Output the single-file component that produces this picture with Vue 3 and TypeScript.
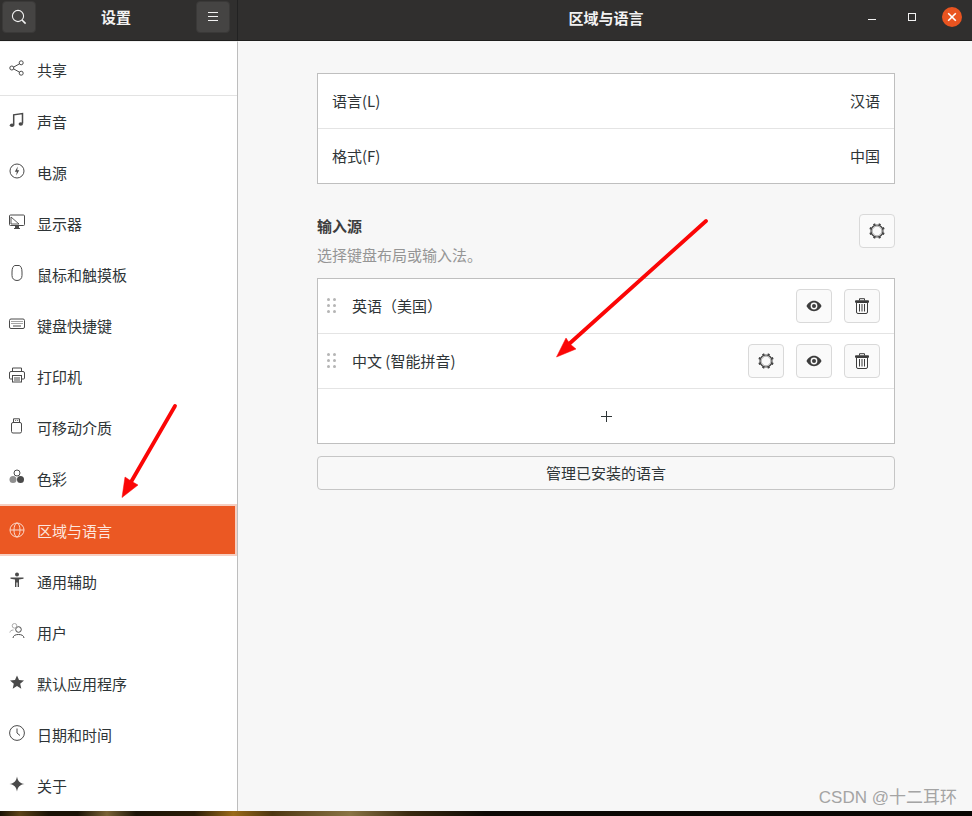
<script setup lang="ts">
type NavItem = { label: string; icon: string; active?: boolean; sep?: boolean }

const items: NavItem[] = [
  { label: '共享', icon: 'share', sep: true },
  { label: '声音', icon: 'music' },
  { label: '电源', icon: 'power' },
  { label: '显示器', icon: 'display' },
  { label: '鼠标和触摸板', icon: 'mouse' },
  { label: '键盘快捷键', icon: 'keyboard' },
  { label: '打印机', icon: 'printer' },
  { label: '可移动介质', icon: 'usb' },
  { label: '色彩', icon: 'color' },
  { label: '区域与语言', icon: 'globe', active: true },
  { label: '通用辅助', icon: 'access' },
  { label: '用户', icon: 'users' },
  { label: '默认应用程序', icon: 'star' },
  { label: '日期和时间', icon: 'clock' },
  { label: '关于', icon: 'about' },
]

const gearTeeth = [0, 45, 90, 135, 180, 225, 270, 315]
</script>

<template>
  <div class="screen">
    <div class="window">
      <header class="titlebar">
        <div class="titlebar__left">
          <button class="hbtn">
            <svg width="16" height="16" viewBox="0 0 16 16" fill="none" stroke="#f2f2f2" stroke-width="1.1">
              <circle cx="7" cy="7" r="5.6" />
              <path d="M11 11l3.6 3.6" stroke-width="1.6" />
            </svg>
          </button>
          <span class="titlebar__title">设置</span>
          <button class="hbtn">
            <svg width="12" height="12" viewBox="0 0 12 12" stroke="#f2f2f2" stroke-width="1">
              <path d="M1 1.5h10M1 5.5h10M1 9.5h10" />
            </svg>
          </button>
        </div>
        <div class="titlebar__right">
          <span class="titlebar__title titlebar__title--main">区域与语言</span>
          <div class="wm">
            <span class="wm__min"></span>
            <span class="wm__max"></span>
            <span class="wm__close">
              <svg width="10" height="10" viewBox="0 0 10 10" stroke="#fff" stroke-width="1.6">
                <path d="M1.2 1.2l7.6 7.6M8.8 1.2L1.2 8.8" />
              </svg>
            </span>
          </div>
        </div>
      </header>

      <div class="content">
        <aside class="sidebar">
          <ul class="nav">
            <li
              v-for="item in items"
              :key="item.label"
              :class="['nav__row', item.active && 'nav__row--active', item.sep && 'nav__row--sep']"
            >
              <svg class="nav__icon" width="16" height="16" viewBox="0 0 16 16" fill="none" stroke="currentColor">
                <template v-if="item.icon === 'share'">
                  <circle cx="2.8" cy="8" r="2" /><circle cx="12.2" cy="2.8" r="2" /><circle cx="12.2" cy="13.2" r="2" />
                  <path d="M4.6 7.1l5.800-3.200M4.6 8.900l5.800 3.200" />
                </template>
                <template v-else-if="item.icon === 'music'">
                  <path d="M4.700 13V2.800l8.800-1.300V11.500" stroke-width="1.500" />
                  <ellipse cx="3" cy="13.200" rx="2.200" ry="1.800" fill="currentColor" stroke="none" />
                  <ellipse cx="11.800" cy="12" rx="2.200" ry="1.800" fill="currentColor" stroke="none" />
                </template>
                <template v-else-if="item.icon === 'power'">
                  <circle cx="8" cy="8" r="7" />
                  <path d="M8.800 3.500L5.800 8.800h2l-.6 3.700 3-5.300h-2z" fill="currentColor" stroke="none" />
                </template>
                <template v-else-if="item.icon === 'display'">
                  <rect x="0.500" y="1" width="15" height="10.500" rx="1" />
                  <path d="M2 3l8 7H2z" stroke-width="0.900" />
                  <path d="M5 14.500h6M6.500 11.500h3v3h-3z" fill="currentColor" />
                </template>
                <template v-else-if="item.icon === 'mouse'">
                  <path d="M5.800.5h4.400C11.800 1 13 3 13 7v3.500c0 3-2 5-5 5s-5-2-5-5V7c0-4 1.200-6 2.800-6.500z" />
                </template>
                <template v-else-if="item.icon === 'keyboard'">
                  <rect x="0.500" y="3" width="15" height="9.500" rx="1.500" />
                  <path d="M2.500 5.500h11M2.500 7.500h11" stroke-dasharray="1 1" />
                  <path d="M4 10h8" />
                </template>
                <template v-else-if="item.icon === 'printer'">
                  <path d="M3.500 4.500V1h9v3.500" />
                  <path d="M3.500 12H1.500a1 1 0 0 1-1-1V6a1.500 1.500 0 0 1 1.500-1.500h12A1.500 1.500 0 0 1 15.500 6v5a1 1 0 0 1-1 1h-2" />
                  <rect x="3.500" y="8.500" width="9" height="6.500" />
                  <path d="M5 11h6M5 13h6" />
                </template>
                <template v-else-if="item.icon === 'usb'">
                  <rect x="2.500" y="4.500" width="10" height="10.500" rx="1.500" />
                  <path d="M4.500 4.500V.8h6v3.700M6.300 2.500h.8M8.300 2.500h.8" />
                </template>
                <template v-else-if="item.icon === 'color'">
                  <circle cx="8" cy="4" r="3" />
                  <circle cx="4" cy="10.500" r="3.500" fill="#8f8f8f" stroke="none" />
                  <circle cx="11.500" cy="10.500" r="3.500" fill="currentColor" stroke="none" />
                </template>
                <template v-else-if="item.icon === 'globe'">
                  <circle cx="8" cy="8" r="7" />
                  <ellipse cx="8" cy="8" rx="3" ry="7" />
                  <path d="M1 8h14" />
                </template>
                <template v-else-if="item.icon === 'access'">
                  <circle cx="8" cy="2.500" r="2" fill="currentColor" stroke="none" />
                  <path d="M1.500 5.500h13v1.300L10 7.500V15H8.600v-4.500H7.400V15H6V7.500L1.500 6.800z" fill="currentColor" stroke="none" />
                </template>
                <template v-else-if="item.icon === 'users'">
                  <circle cx="9.500" cy="6.500" r="2.800" />
                  <path d="M4 15c.2-2.500 2.500-3.500 5.500-3.500s5.300 1 5.500 3.500" />
                  <circle cx="5.500" cy="2.800" r="2.300" stroke="#aaa" />
                  <path d="M.8 9.500C1 8 2.500 7 4.500 7" stroke="#aaa" />
                </template>
                <template v-else-if="item.icon === 'star'">
                  <path d="M8 1.500l2 4.500 5 .5-3.800 3.300 1.100 5L8 12.100l-4.300 2.700 1.100-5L1 6.500l5-.5z" fill="currentColor" stroke="none" />
                </template>
                <template v-else-if="item.icon === 'clock'">
                  <circle cx="8" cy="8" r="7.400" />
                  <path d="M8 3.500V8l3 2.500" />
                </template>
                <template v-else>
                  <path d="M8 .5C8.700 5 11 7.300 15.500 8 11 8.700 8.700 11 8 15.500 7.300 11 5 8.700.5 8 5 7.300 7.300 5 8 .5z" fill="currentColor" stroke="none" />
                </template>
              </svg>
              <span class="nav__label">{{ item.label }}</span>
            </li>
          </ul>
        </aside>

        <main class="main">
          <section class="panel">
            <div class="row row--text"><span>语言(L)</span><span>汉语</span></div>
            <div class="row row--text"><span>格式(F)</span><span>中国</span></div>
          </section>

          <div class="sources-head">
            <div class="sources-head__text">
              <h2 class="sources-head__title">输入源</h2>
              <p class="sources-head__sub">选择键盘布局或输入法。</p>
            </div>
            <button class="ibtn">
              <svg width="16" height="16" viewBox="0 0 16 16" fill="none" stroke="#444">
                <circle cx="8" cy="8" r="6" stroke-width="1.200" />
                <circle cx="8" cy="8" r="4.800" stroke="#999" stroke-width="0.800" />
                <path v-for="a in gearTeeth" :key="a" d="M8 .2v1.600" stroke-width="2.200" :transform="`rotate(${a + 22.5} 8 8)`" />
              </svg>
            </button>
          </div>

          <section class="panel panel--list">
            <div class="row">
              <span class="grip"><i v-for="n in 6" :key="n"></i></span>
              <span class="row__name">英语（美国）</span>
              <button class="ibtn">
                <svg width="16" height="16" viewBox="0 0 16 16">
                  <path d="M8 2.800C4.400 2.800 1.600 5.500.5 8c1.100 2.500 3.900 5.200 7.500 5.200s6.400-2.700 7.500-5.200C14.400 5.500 11.600 2.800 8 2.800z" fill="#3d3d3d" />
                  <circle cx="8" cy="8" r="3.400" fill="#fafafa" />
                  <circle cx="8" cy="8" r="2" fill="#3d3d3d" />
                </svg>
              </button>
              <button class="ibtn">
                <svg width="14" height="16" viewBox="0 0 14 16" fill="none" stroke="#3d3d3d">
                  <path d="M1.500 4.500h11V14a1.500 1.500 0 0 1-1.500 1.500H3A1.500 1.500 0 0 1 1.500 14z" />
                  <path d="M.5 2.800h13V4.300H.5z" fill="#3d3d3d" />
                  <path d="M4.500 2.500V.7h5v1.800M4.500 6v7.500M7 6v7.500M9.500 6v7.500" />
                </svg>
              </button>
            </div>
            <div class="row">
              <span class="grip"><i v-for="n in 6" :key="n"></i></span>
              <span class="row__name">中文 (智能拼音)</span>
              <button class="ibtn">
                <svg width="16" height="16" viewBox="0 0 16 16" fill="none" stroke="#444">
                  <circle cx="8" cy="8" r="6" stroke-width="1.200" />
                  <circle cx="8" cy="8" r="4.800" stroke="#999" stroke-width="0.800" />
                  <path v-for="a in gearTeeth" :key="a" d="M8 .2v1.600" stroke-width="2.200" :transform="`rotate(${a + 22.5} 8 8)`" />
                </svg>
              </button>
              <button class="ibtn">
                <svg width="16" height="16" viewBox="0 0 16 16">
                  <path d="M8 2.800C4.400 2.800 1.600 5.500.5 8c1.100 2.500 3.900 5.200 7.500 5.200s6.400-2.700 7.500-5.200C14.400 5.500 11.600 2.800 8 2.800z" fill="#3d3d3d" />
                  <circle cx="8" cy="8" r="3.400" fill="#fafafa" />
                  <circle cx="8" cy="8" r="2" fill="#3d3d3d" />
                </svg>
              </button>
              <button class="ibtn">
                <svg width="14" height="16" viewBox="0 0 14 16" fill="none" stroke="#3d3d3d">
                  <path d="M1.500 4.500h11V14a1.500 1.500 0 0 1-1.500 1.500H3A1.500 1.500 0 0 1 1.500 14z" />
                  <path d="M.5 2.800h13V4.300H.5z" fill="#3d3d3d" />
                  <path d="M4.500 2.500V.7h5v1.800M4.500 6v7.500M7 6v7.500M9.500 6v7.500" />
                </svg>
              </button>
            </div>
            <div class="row row--add">
              <svg width="11" height="11" viewBox="0 0 11 11" stroke="#2e3436"><path d="M5.500 0v11M0 5.500h11" /></svg>
            </div>
          </section>

          <button class="manage">管理已安装的语言</button>
        </main>
      </div>
    </div>
    <div class="wallpaper"></div>

    <!-- annotations drawn over the screenshot -->
    <svg class="arrows" width="972" height="816" viewBox="0 0 972 816">
      <g fill="#fb0606" stroke="#fb0606" stroke-linejoin="round">
        <path d="M175 406L131 482" stroke-width="3.800" stroke-linecap="round" />
        <path d="M122 497.500L125 477L131 481L138 485z" stroke-width="0.500" />
        <path d="M706 221L569 344" stroke-width="3.800" stroke-linecap="round" />
        <path d="M556.500 357L566 338L570 344L576 349z" stroke-width="0.500" />
      </g>
    </svg>
    <span class="watermark">CSDN @十二耳环</span>
  </div>
</template>

<style>
html, body { margin: 0; background: #1a1208; overflow: hidden; }
</style>

<style scoped>
.screen {
  position: relative;
  width: 972px;
  height: 816px;
  overflow: hidden;
  font-family: "Noto Sans CJK SC", "Noto Sans", sans-serif;
  font-size: 14px;
  color: #2e3436;
}

.window {
  height: 811px;
  display: flex;
  flex-direction: column;
  background: #f7f7f7;
}

.wallpaper {
  height: 5px;
  background: linear-gradient(90deg, #1a1206 0, #5c4318 2%, #1a1206 5%, #1a1206 8%, #7a6336 11%, #1c1408 14%, #2a1c08 20%, #9a6a18 24%, #4c3510 28%, #8a7444 36%, #3a2a10 42%, #0d0905 50%, #090603 100%);
}

.titlebar {
  height: 41px;
  flex: none;
  display: flex;
  background: #302f2e;
  border-bottom: 1px solid #1e1e1d;
  box-sizing: border-box;
  color: #f2f2f2;
}

.titlebar__left {
  width: 238px;
  flex: none;
  box-sizing: border-box;
  padding: 1px 7px 0 2px;
  display: flex;
  justify-content: space-between;
  align-items: flex-start;
  border-right: 1px solid #222;
}

.titlebar__right {
  flex: 1;
  position: relative;
  display: flex;
  justify-content: center;
  align-items: center;
}

.titlebar__title {
  font-size: 15px;
  font-weight: 700;
  line-height: 32px;
}

.titlebar__title--main {
  line-height: 36px;
  margin-bottom: 4px;
  margin-left: 2px;
}

.hbtn {
  width: 34px;
  height: 32px;
  padding: 0;
  display: flex;
  align-items: center;
  justify-content: center;
  background: #454443;
  border: 1px solid #3a3938;
  border-radius: 4px;
}

.wm {
  position: absolute;
  right: 10px;
  top: 7px;
  display: flex;
  align-items: center;
  gap: 26px;
}

.wm__min {
  width: 8px;
  height: 1px;
  background: #f2f2f2;
  margin-top: 4px;
  margin-right: 6px;
}

.wm__max {
  width: 6px;
  height: 6px;
  border: 1px solid #f2f2f2;
}

.wm__close {
  width: 20px;
  height: 20px;
  border-radius: 50%;
  background: #e95420;
  display: flex;
  align-items: center;
  justify-content: center;
}

.content {
  flex: 1;
  min-height: 0;
  display: flex;
}

.sidebar {
  width: 238px;
  flex: none;
  box-sizing: border-box;
  background: #fff;
  border-right: 1px solid #bdbdbd;
  padding-top: 2px;
  border-top: 1px solid #f1f1f1;
}

.nav {
  list-style: none;
  margin: 0;
  padding: 0;
}

.nav__row {
  height: 51px;
  display: flex;
  align-items: center;
  padding-left: 9px;
  gap: 12px;
  font-size: 15px;
  color: #2e3436;
}

.nav__row--sep {
  height: 52px;
  border-bottom: 1px solid #e3e3e3;
  box-sizing: border-box;
}

.nav__row--active {
  height: 52px;
  box-sizing: border-box;
  padding-top: 2px;
  background: #eb5823;
  color: #fde6de;
  border-top: 2px solid #f6cfc2;
  border-bottom: 2px solid #f6cfc2;
  border-right: 2px solid #f6cfc2;
}

.nav__icon {
  color: #4a4a4a;
  flex: none;
  margin-top: -3px;
}

.nav__row--active .nav__icon {
  color: #fbd8cb;
}

.nav__label {
  line-height: 20px;
}

.main {
  flex: 1;
  min-width: 0;
  box-sizing: border-box;
  padding: 32px 77px 0 79px;
}

.panel {
  border: 1px solid #bfbfbf;
  background: #fff;
}

.row {
  height: 55px;
  box-sizing: border-box;
  display: flex;
  align-items: center;
  gap: 12px;
  padding: 0 14px 0 9px;
  border-bottom: 1px solid #e4e4e4;
  font-size: 15px;
}

.row:last-child {
  height: 54px;
  border-bottom: none;
}

.row--text {
  justify-content: space-between;
  padding: 0 14px 2px 14px;
}

.row--add {
  justify-content: center;
  padding: 0;
}

.row__name {
  flex: 1;
  margin-left: 4px;
  margin-bottom: 2px;
}

.grip {
  width: 9px;
  display: grid;
  grid-template-columns: repeat(2, 3px);
  gap: 3px;
  margin-bottom: 2px;
}

.grip i {
  width: 3px;
  height: 3px;
  border-radius: 50%;
  background: #b5b5b5;
}

.sources-head {
  display: flex;
  justify-content: space-between;
  align-items: flex-start;
  margin-top: 30px;
  margin-bottom: 13px;
}

.sources-head__title {
  margin: 2px 0 0;
  font-size: 15px;
  font-weight: 700;
  line-height: 20px;
  color: #3d3d3d;
}

.sources-head__sub {
  margin: 9px 0 0;
  font-size: 15px;
  line-height: 20px;
  color: #959595;
}

.ibtn {
  width: 36px;
  height: 34px;
  flex: none;
  padding: 0;
  display: flex;
  align-items: center;
  justify-content: center;
  background: #fafafa;
  border: 1px solid #d9d9d9;
  border-radius: 4px;
}

.manage {
  display: block;
  width: 100%;
  height: 34px;
  margin-top: 12px;
  padding: 0 0 2px;
  background: #f8f8f8;
  border: 1px solid #c6c6c6;
  border-radius: 4px;
  font: inherit;
  font-size: 15px;
  color: #2e3436;
}

.arrows {
  position: absolute;
  left: 0;
  top: 0;
  pointer-events: none;
}

.watermark {
  position: absolute;
  right: 15px;
  top: 786px;
  font-size: 17px;
  line-height: 24px;
  color: #a4a4a4;
  font-family: "Liberation Sans", "Noto Sans CJK SC", sans-serif;
}
</style>
